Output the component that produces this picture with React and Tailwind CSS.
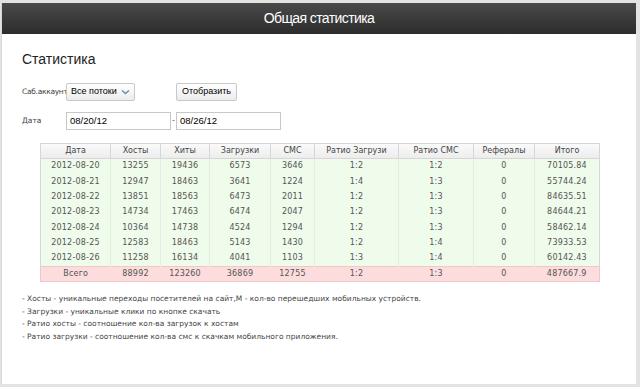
import React from 'react';

const rows = [
  ['2012-08-20', '13255', '19436', '6573', '3646', '1:2', '1:2', '0', '70105.84'],
  ['2012-08-21', '12947', '18463', '3641', '1224', '1:4', '1:3', '0', '55744.24'],
  ['2012-08-22', '13851', '18563', '6473', '2011', '1:2', '1:3', '0', '84635.51'],
  ['2012-08-23', '14734', '17463', '6474', '2047', '1:2', '1:3', '0', '84644.21'],
  ['2012-08-24', '10364', '14738', '4524', '1294', '1:2', '1:3', '0', '58462.14'],
  ['2012-08-25', '12583', '18463', '5143', '1430', '1:2', '1:4', '0', '73933.53'],
  ['2012-08-26', '11258', '16134', '4041', '1103', '1:3', '1:4', '0', '60142.43'],
];

const total = ['Всего', '88992', '123260', '36869', '12755', '1:2', '1:3', '0', '487667.9'];

const headers = ['Дата', 'Хосты', 'Хиты', 'Загрузки', 'СМС', 'Ратио Загрузи', 'Ратио СМС', 'Рефералы', 'Итого'];

// column widths measured off the screenshot
const widths = ['w-[70px]', 'w-[50px]', 'w-[49px]', 'w-[61px]', 'w-[44px]', 'w-[84px]', 'w-[75px]', 'w-[61px]', 'w-[65px]'];

const notes = [
  '- Хосты - уникальные переходы посетителей на сайт,М - кол-во перешедших мобильных устройств.',
  '- Загрузки - уникальные клики по кнопке скачать',
  '- Ратио хосты - соотношение кол-ва загрузок к хостам',
  '- Ратио загрузки - соотношение кол-ва смс к скачкам мобильного приложения.',
];

const StatsTable = () => (
  <table className="ml-[18px] border-collapse table-fixed text-[8px] text-[#555] tracking-[0.2px]">
    <thead>
      <tr className="h-[15px] bg-gradient-to-b from-[#fafafa] to-[#ececec]">
        {headers.map((h, i) => (
          <th key={h} className={`${widths[i]} border border-[#d6d6d6] font-normal text-[#444] p-0 tracking-normal`}>{h}</th>
        ))}
      </tr>
    </thead>
    <tbody>
      {rows.map(r => (
        <tr key={r[0]} className="h-[15.4px] bg-[#effbeb]">
          {r.map((c, i) => (
            <td key={i} className="text-center p-0 border-x border-[#e3eee0] first:border-l-[#d6d6d6] last:border-r-[#d6d6d6]">{c}</td>
          ))}
        </tr>
      ))}
      <tr className="h-[15.4px] bg-[#fcdcdc]">
        {total.map((c, i) => (
          <td key={i} className="text-center p-0 border-y border-[#efc9c9] first:border-l last:border-r">{c}</td>
        ))}
      </tr>
    </tbody>
  </table>
);

export default function App() {
  return (
    <div className="h-[387px] w-[640px] bg-[#e3e3e1] pt-[3px] pl-[1px] pr-[4px] pb-[3px] font-['DejaVu_Sans',sans-serif]">
      <div className="h-full bg-white border-l border-[#d8d8d6] flex flex-col">
        <div className="h-[31px] shrink-0 bg-gradient-to-b from-[#4a4a4a] to-[#2c2c2c] flex items-center justify-center">
          <span className="text-white text-[14px] font-['Liberation_Sans',sans-serif] tracking-[-0.6px]">Общая статистика</span>
        </div>

        <div className="pl-[20px] pt-[16px]">
          <h1 className="text-[14px] leading-[18px] text-[#222] font-['Liberation_Sans',sans-serif]">Статистика</h1>

          <div className="flex items-center mt-[15px] h-[18px]">
            <span className="w-[44px] text-[7.5px] text-[#444] tracking-[-0.3px] whitespace-nowrap">Саб.аккаунт</span>
            <div className="w-[69px] h-[18px] border border-[#c8c8c8] rounded-[2px] bg-gradient-to-b from-white to-[#ececec] flex items-center px-[4px] gap-[4px] font-['Liberation_Sans',sans-serif] whitespace-nowrap">
              <span className="text-[9px] text-black">Все потоки</span>
              <svg width="9" height="6" viewBox="0 0 9 6" className="shrink-0">
                <path d="M1 1.5 L4.5 4.5 L8 1.5" stroke="#6a8fc0" strokeWidth="1.6" fill="none" />
              </svg>
            </div>
            <button className="ml-[41px] w-[61px] h-[18px] border border-[#c8c8c8] rounded-[2px] bg-gradient-to-b from-white to-[#ececec] text-[9px] text-black font-['Liberation_Sans',sans-serif]">Отобразить</button>
          </div>

          <div className="flex items-center mt-[11px] h-[18px]">
            <span className="w-[44px] text-[7.5px] text-[#444]">Дата</span>
            <div className="w-[105px] h-[18px] border border-[#c8c8c8] flex items-center px-[3px] text-[9.5px] text-black font-['Liberation_Sans',sans-serif]">08/20/12</div>
            <span className="w-[5px] text-center text-[8px] text-[#666]">-</span>
            <div className="w-[105px] h-[18px] border border-[#c8c8c8] flex items-center px-[3px] text-[9.5px] text-black font-['Liberation_Sans',sans-serif]">08/26/12</div>
          </div>

          <div className="mt-[13px]">
            <StatsTable />
          </div>

          <div className="mt-[11px] flex flex-col gap-[1px] text-[7.5px] leading-[11.5px] text-[#444]">
            {notes.map(n => (
              <div key={n}>{n}</div>
            ))}
          </div>
        </div>
      </div>
    </div>
  );
}
